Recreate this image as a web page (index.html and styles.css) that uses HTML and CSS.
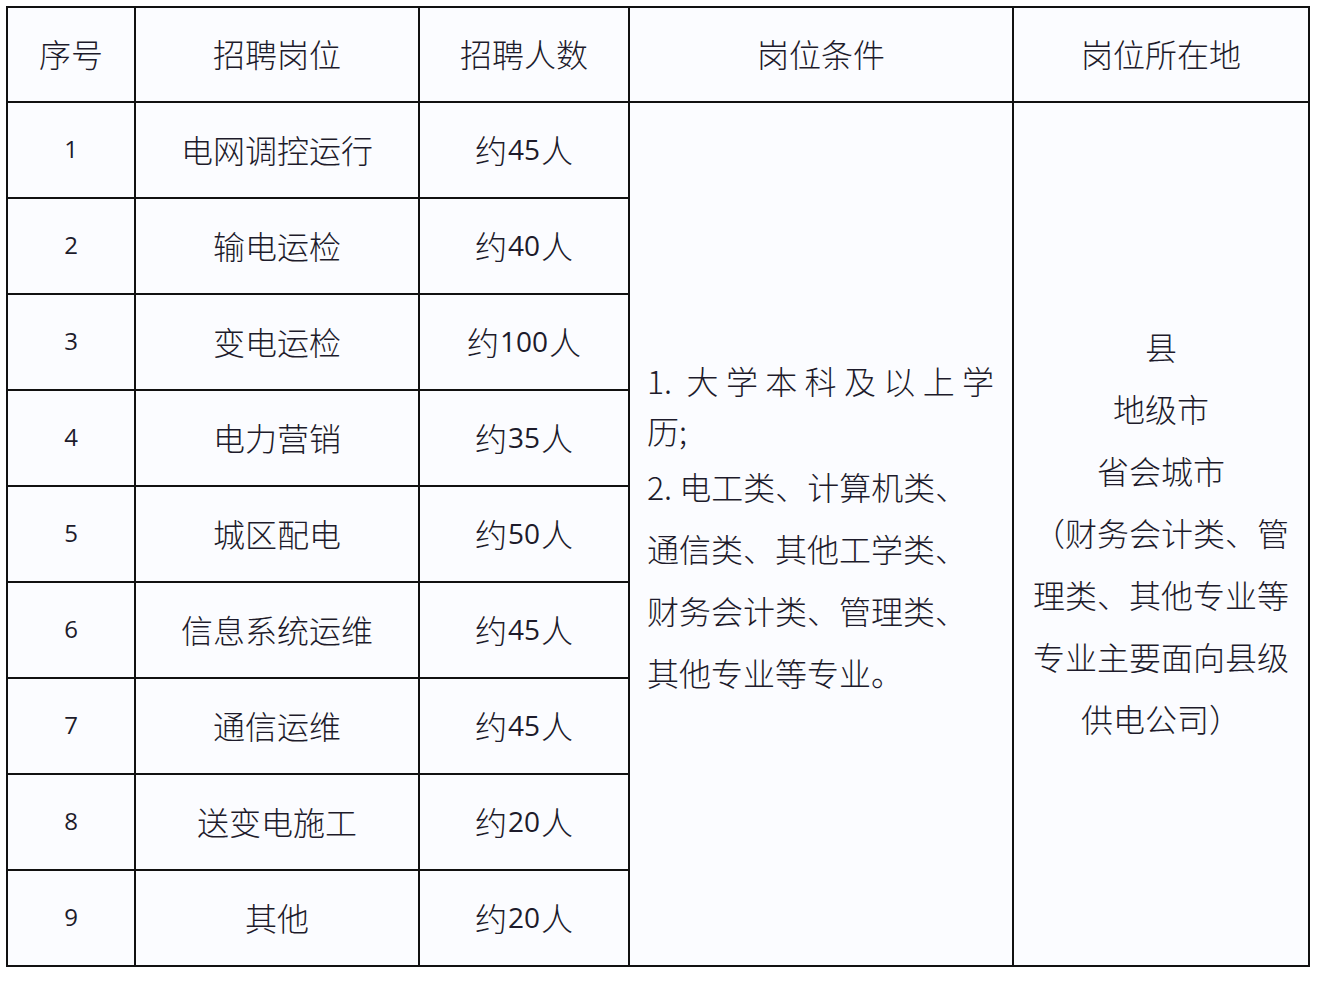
FILE: index.html
```html
<!DOCTYPE html>
<html lang="zh-CN">
<head>
<meta charset="utf-8">
<title>招聘岗位</title>
<link rel="stylesheet" href="styles.css">
</head>
<body>
<div class="grid">
  <div class="cell head">序号</div>
  <div class="cell head">招聘岗位</div>
  <div class="cell head">招聘人数</div>
  <div class="cell head">岗位条件</div>
  <div class="cell head">岗位所在地</div>

  <div class="cell num">1</div><div class="cell">电网调控运行</div><div class="cell">约<span class="d">45</span>人</div>
  <div class="cell cond">
    <div class="p1">
      <div class="jline">1. 大学本科及以上学</div>
      <div>历;</div>
    </div>
    <div class="p2">2. 电工类、计算机类、<br>通信类、其他工学类、<br>财务会计类、管理类、<br>其他专业等专业。</div>
  </div>
  <div class="cell loc">县<br>地级市<br>省会城市<br>（财务会计类、管<br>理类、其他专业等<br>专业主要面向县级<br>供电公司）</div>

  <div class="cell num">2</div><div class="cell">输电运检</div><div class="cell">约<span class="d">40</span>人</div>
  <div class="cell num">3</div><div class="cell">变电运检</div><div class="cell">约<span class="d">100</span>人</div>
  <div class="cell num">4</div><div class="cell">电力营销</div><div class="cell">约<span class="d">35</span>人</div>
  <div class="cell num">5</div><div class="cell">城区配电</div><div class="cell">约<span class="d">50</span>人</div>
  <div class="cell num">6</div><div class="cell">信息系统运维</div><div class="cell">约<span class="d">45</span>人</div>
  <div class="cell num">7</div><div class="cell">通信运维</div><div class="cell">约<span class="d">45</span>人</div>
  <div class="cell num">8</div><div class="cell">送变电施工</div><div class="cell">约<span class="d">20</span>人</div>
  <div class="cell num">9</div><div class="cell">其他</div><div class="cell">约<span class="d">20</span>人</div>
</div>
</body>
</html>
```
FILE: styles.css
```css
html, body {
  margin: 0;
  padding: 0;
  background: #ffffff;
}
body {
  padding: 6px 0 0 6px;
  font-family: "Noto Sans CJK SC", "Noto Sans", sans-serif;
  color: #1d1b2b;
}
.grid {
  display: grid;
  width: 1300px;
  grid-template-columns: 126px 282px 208px 382px 294px;
  grid-template-rows: 93px repeat(9, 94px);
  gap: 2px;
  padding: 2px;
  background: #111;
}
.cell {
  background: #fbfcff;
  display: flex;
  align-items: center;
  justify-content: center;
  font-size: 32px;
  font-weight: 300;
  line-height: 1;
  padding-bottom: 3px;
}
.num {
  font-family: "Open Sans", "Liberation Sans", sans-serif;
  font-size: 24px;
  font-weight: 400;
}
.d {
  font-family: "Open Sans", "Liberation Sans", sans-serif;
  font-size: 28px;
  font-weight: 400;
  margin: 0 1px;
}
.cond {
  grid-column: 4;
  grid-row: 2 / span 9;
  flex-direction: column;
  align-items: stretch;
  justify-content: center;
  padding: 0 18px 10px 17px;
  text-align: left;
}
.p1 {
  line-height: 50px;
}
.jline {
  text-align: justify;
  text-align-last: justify;
}
.p2 {
  line-height: 62px;
}
.loc {
  grid-column: 5;
  grid-row: 2 / span 9;
  text-align: center;
  line-height: 62px;
  padding-bottom: 4px;
}
```
